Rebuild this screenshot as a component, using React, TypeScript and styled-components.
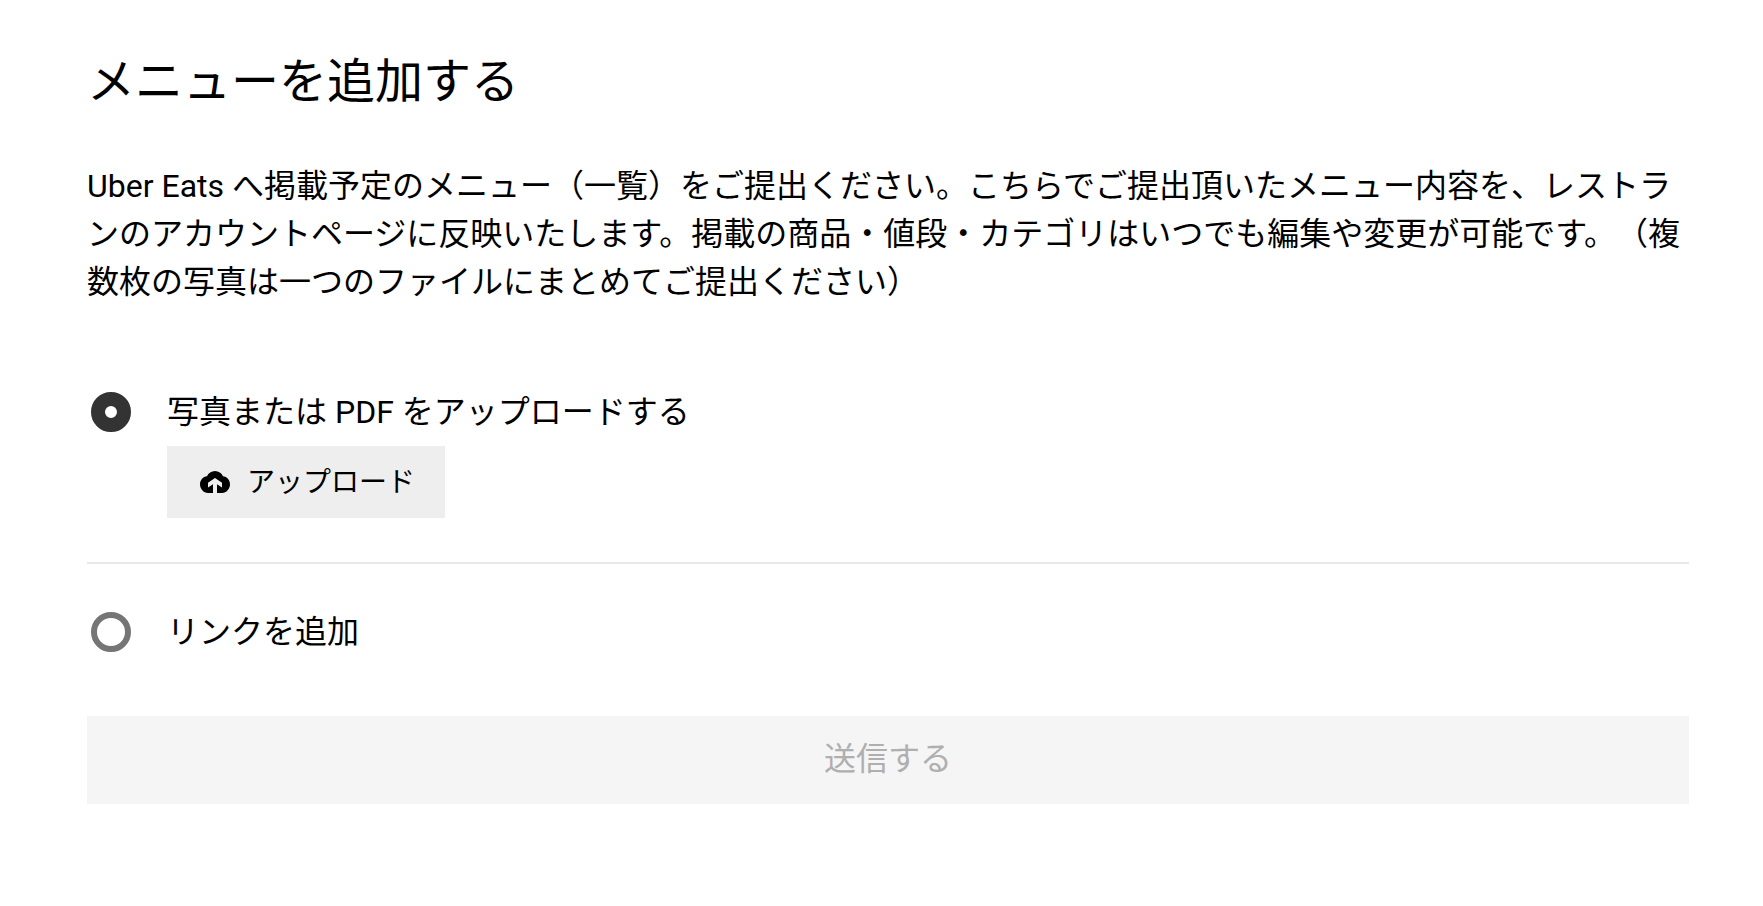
import React, { useState } from "react";
import styled, { createGlobalStyle } from "styled-components";

const GlobalStyle = createGlobalStyle`
  *, *::before, *::after { box-sizing: border-box; }
  body {
    margin: 0;
    background: #ffffff;
    color: #000000;
    font-family: Roboto, "Noto Sans CJK JP", sans-serif;
    text-spacing-trim: space-all;
  }
`;

const Page = styled.main`
  padding: 46px 74px 48px 87px;
`;

const Title = styled.h1`
  margin: 0;
  font-size: 48px;
  line-height: 72px;
  font-weight: 400;
`;

const Description = styled.p`
  margin: 44px 0 0;
  font-size: 32px;
  line-height: 48px;
`;

const Options = styled.fieldset`
  margin: 82px 0 0;
  padding: 0;
  border: 0;
  min-width: 0;
`;

const Option = styled.div`
  display: grid;
  grid-template-columns: 48px 1fr;
  column-gap: 32px;
  align-items: center;

  & + & {
    margin-top: 44px;
    padding-top: 44px;
    border-top: 2px solid #e9e9e9;
  }
`;

const Radio = styled.input`
  appearance: none;
  justify-self: center;
  width: 40px;
  height: 40px;
  margin: 0;
  border: 6px solid #757575;
  border-radius: 50%;
  background: #ffffff;

  &:checked {
    border: 14px solid #333333;
  }
`;

const OptionLabel = styled.label`
  font-size: 32px;
  line-height: 48px;
`;

const UploadButton = styled.button`
  grid-column: 2;
  justify-self: start;
  display: flex;
  align-items: center;
  gap: 16px;
  height: 72px;
  margin-top: 10px;
  padding: 0 30px 0 32px;
  border: 0;
  background: #eeeeee;
  color: #000000;
  font: inherit;
  font-size: 28px;
`;

const UploadText = styled.span`
  padding-bottom: 4px;
`;

const SubmitButton = styled.button`
  display: block;
  width: 100%;
  height: 88px;
  margin-top: 60px;
  padding: 0 0 8px;
  border: 0;
  background: #f5f5f5;
  color: #afafaf;
  font: inherit;
  font-size: 32px;
`;

const CloudUpload = () => (
  <svg width="32" height="32" viewBox="0 0 32 32" aria-hidden="true">
    <path
      fill="currentColor"
      d="M16 5C12.4 5 9.4 7.100 8 10.200C4.200 10.600 1 13.900 1 18.300C1 23 4.500 27 9 27H14V18.300L9 21.500V16.700L16 12L23 16.700V21.500L18 18.300V27H23C27.500 27 31 23 31 18.300C31 13.900 27.800 10.600 24 10.200C22.600 7.100 19.600 5 16 5Z"
    />
  </svg>
);

export default function App() {
  const [source, setSource] = useState("file");
  return (
    <Page>
      <GlobalStyle />
      <Title>メニューを追加する</Title>
      <Description>
        Uber Eats へ掲載予定のメニュー（一覧）をご提出ください。こちらでご提出頂いたメニュー内容を、レストランのアカウントページに反映いたします。掲載の商品・値段・カテゴリはいつでも編集や変更が可能です。（複数枚の写真は一つのファイルにまとめてご提出ください）
      </Description>
      <Options>
        <Option>
          <Radio type="radio" id="source-file" name="source" checked={source === "file"} onChange={() => setSource("file")} />
          <OptionLabel htmlFor="source-file">写真または PDF をアップロードする</OptionLabel>
          <UploadButton type="button">
            <CloudUpload />
            <UploadText>アップロード</UploadText>
          </UploadButton>
        </Option>
        <Option>
          <Radio type="radio" id="source-link" name="source" checked={source === "link"} onChange={() => setSource("link")} />
          <OptionLabel htmlFor="source-link">リンクを追加</OptionLabel>
        </Option>
      </Options>
      <SubmitButton type="submit" disabled>送信する</SubmitButton>
    </Page>
  );
}
